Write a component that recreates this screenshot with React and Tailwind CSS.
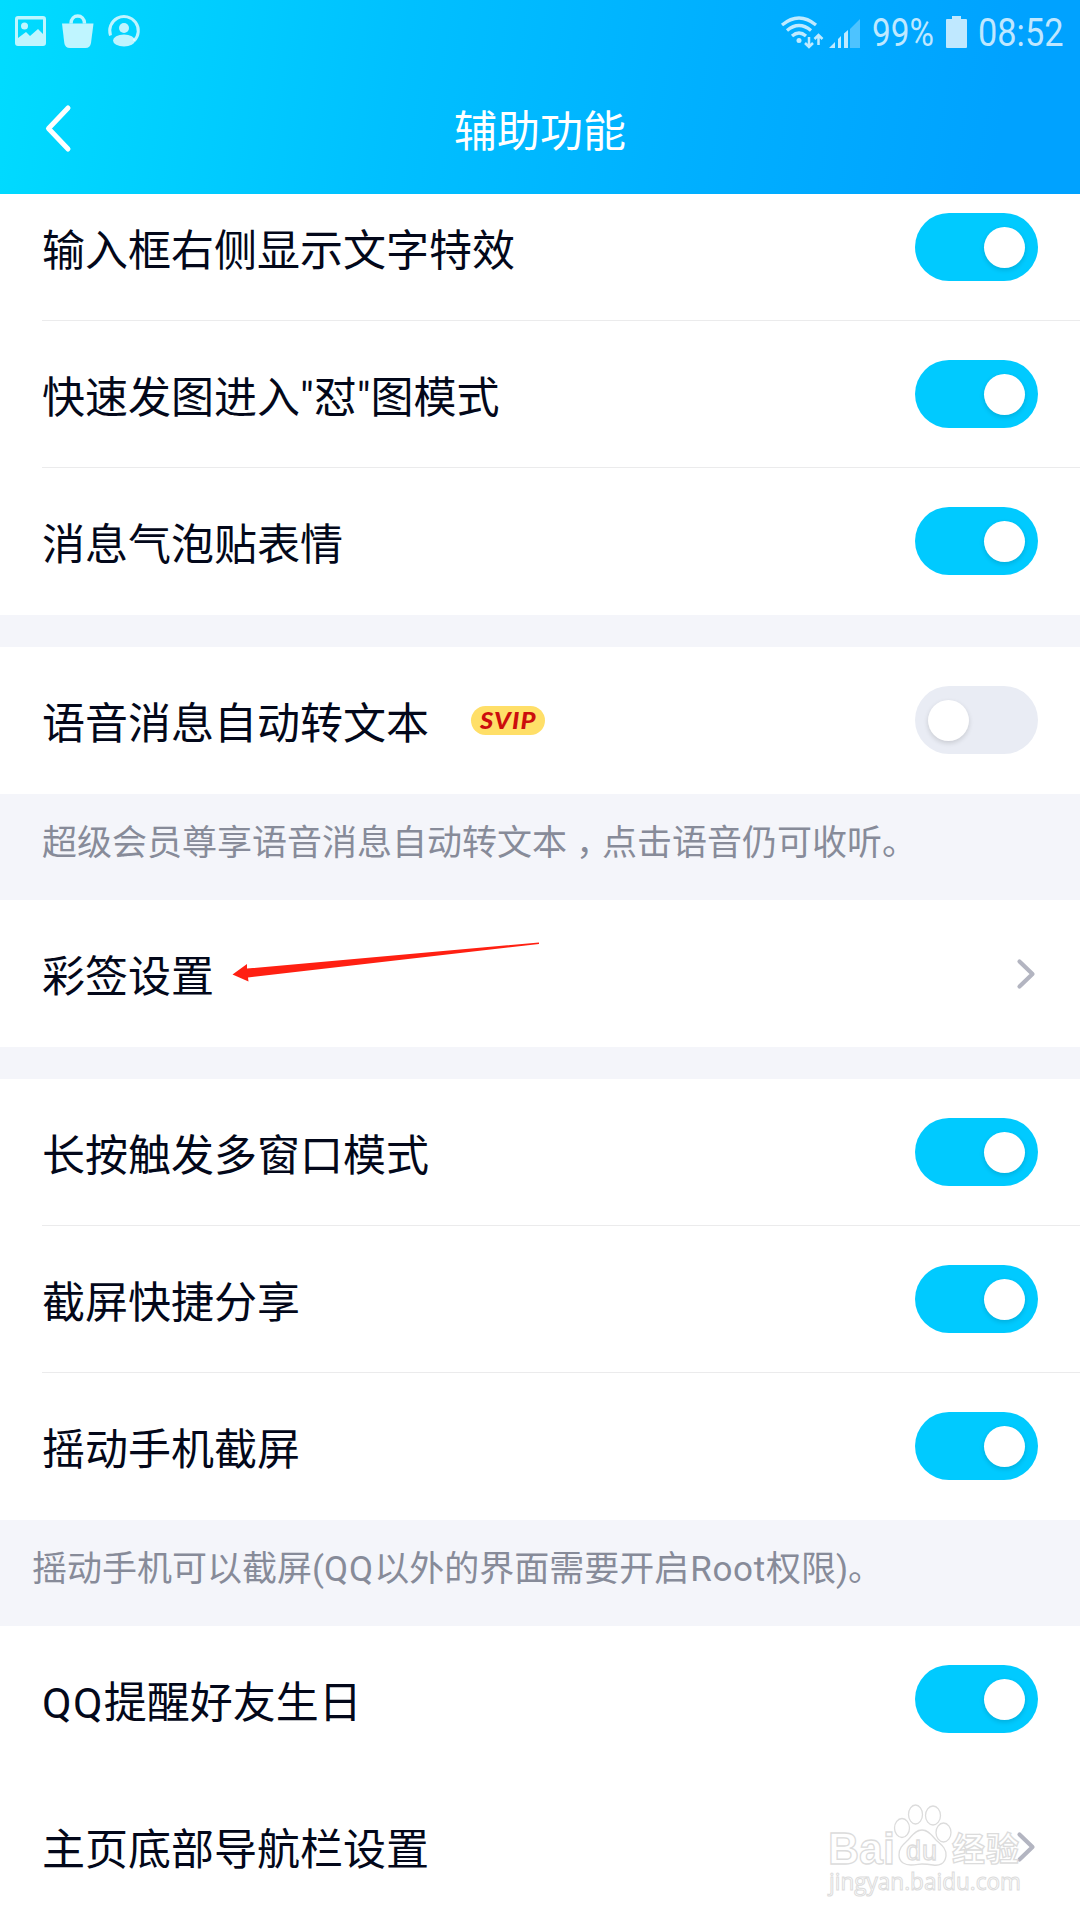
function Toggle({ on = true }) {
  return (
    <div
      className={
        on
          ? "flex h-[68px] w-[123px] items-center justify-end rounded-full bg-[#00caff] pr-[13.5px]"
          : "flex h-[68px] w-[123px] items-center justify-start rounded-full bg-[#e9ecf4] pl-[13px]"
      }
    >
      <div className="h-[41px] w-[41px] rounded-full bg-white shadow-[0_2px_5px_rgba(0,0,0,0.14)]" />
    </div>
  );
}

function Chevron() {
  return (
    <svg width="20" height="32" viewBox="0 0 20 32" fill="none" className="mt-[2px] mr-[2px]">
      <path d="M3.5 3.5 16.500 16 3.5 28.500" stroke="#b3b5c1" strokeWidth="4.200" strokeLinecap="round" strokeLinejoin="round" />
    </svg>
  );
}

function Row({ label, divider, children, extra }) {
  return (
    <div className="flex h-[147px] shrink-0 flex-col bg-white pl-[42px]">
      <div className="flex min-h-0 flex-1 items-center justify-between pr-[42px]">
        <div className="flex items-center">
          <span className="pt-[8px] leading-[60px] whitespace-nowrap text-[43px] text-[#03081a]">{label}</span>
          {extra}
        </div>
        {children}
      </div>
      <div className={divider ? "h-px bg-[#ebebec]" : "h-px"} />
    </div>
  );
}

function Note({ children, inset }) {
  return (
    <p
      className={
        inset
          ? "h-[106px] bg-[#f4f5fa] pt-[24px] pl-[32px] text-[35px] leading-[52px] text-[#878b99]"
          : "h-[106px] bg-[#f4f5fa] pt-[24px] pl-[42px] text-[35px] leading-[52px] text-[#878b99]"
      }
    >
      {children}
    </p>
  );
}

function Gap() {
  return <div className="h-[32px] shrink-0 bg-[#f4f5fa]" />;
}

function StatusBar() {
  return (
    <div className="flex h-[64px] items-center justify-between text-white/75">
      <svg width="150" height="40" viewBox="0 0 150 40" fill="none" className="mt-[-3px]">
        <path fillRule="evenodd" fill="currentColor" d="M18 5h25a3 3 0 0 1 3 3v24a3 3 0 0 1-3 3H18a3 3 0 0 1-3-3V8a3 3 0 0 1 3-3Zm0 3.500V27l8-6 4 4 8-7 5 5V8.500Z" />
        <circle cx="24.500" cy="15" r="3.500" fill="currentColor" />
        <path fill="currentColor" d="M62 12.500h31.500l-2.500 19.500q-.8 5-5.500 5H70q-5 0-5.700-5Z" />
        <path stroke="currentColor" strokeWidth="3.500" d="M71 12.500c0-10 13.500-10 13.500 0" />
        <path stroke="currentColor" strokeWidth="3" d="M110.500 24.500A14.300 14.300 0 1 1 134 30" />
        <circle cx="124" cy="17" r="5" fill="currentColor" />
        <ellipse cx="124" cy="29.500" rx="11" ry="6" fill="currentColor" />
      </svg>
      <div className="flex items-center pr-[17px]">
        <svg width="82" height="40" viewBox="780 10 82 40" fill="none">
          <g stroke="currentColor" strokeWidth="3.300">
            <path d="M782 23q17-14 34 0" />
            <path d="M787 28.500q12-10 24 0" />
            <path d="M792 34q7-6 14 0" />
          </g>
          <circle cx="799" cy="38.500" r="2.500" fill="currentColor" />
          <path d="M809 35v9M805 41l4 4 4-4M818.500 43v-9M814.500 37l4-4 4 4" stroke="currentColor" strokeWidth="2.500" />
          <path fill="currentColor" d="M829 46l6-6v6ZM838 37l3-3v12h-3ZM844 31.500l4-3.500v18h-4Z" />
          <path fill="currentColor" opacity=".4" d="M850 27l10-10v29H850Z" />
        </svg>
        <div className="ml-[10px] w-[64px] pt-[2px] font-['Roboto'] text-[39px] leading-[40px]">
          <span className="inline-block origin-left scale-x-[0.855]">99%</span>
        </div>
        <svg width="21" height="32" viewBox="0 0 21 32" className="ml-[10px]">
          <path fill="currentColor" d="M6 0h9v3h5q1 0 1 1v27q0 1-1 1H1q-1 0-1-1V4q0-1 1-1h5Z" />
        </svg>
        <div className="ml-[11px] w-[85px] pt-[2px] font-['Roboto'] text-[39px] leading-[40px]">
          <span className="inline-block origin-left scale-x-[0.88]">08:52</span>
        </div>
      </div>
    </div>
  );
}

function Header() {
  return (
    <header className="h-[194px] shrink-0 bg-[linear-gradient(100deg,#00dcff_0%,#00c0ff_37%,#00b0ff_64%,#00a2ff_92%)]">
      <StatusBar />
      <div className="grid h-[130px] grid-cols-[200px_1fr_200px] items-center">
        <svg width="28" height="50" viewBox="0 0 28 50" fill="none" className="ml-[44px]">
          <path d="M24 4 4.500 24.500 24 45" stroke="white" strokeWidth="5" strokeLinecap="round" strokeLinejoin="round" />
        </svg>
        <h1 className="pt-[6px] text-center text-[43px] leading-[60px] text-white">辅助功能</h1>
      </div>
    </header>
  );
}

function Watermark() {
  return (
    <svg
      width="220"
      height="110"
      viewBox="820 1795 220 110"
      className="pointer-events-none absolute bottom-[15px] left-[820px]"
      fill="white"
      stroke="#dcdcdc"
      strokeWidth="1.300"
    >
      <text x="828" y="1864" fontFamily="Liberation Sans" fontWeight="bold" fontSize="45" textLength="67" lengthAdjust="spacingAndGlyphs">Bai</text>
      <ellipse cx="902" cy="1828" rx="7.500" ry="9.500" />
      <ellipse cx="915.500" cy="1814.500" rx="7" ry="9.500" />
      <ellipse cx="933" cy="1815.500" rx="7.500" ry="9.500" />
      <ellipse cx="943.500" cy="1832.500" rx="7.500" ry="9.500" />
      <path d="M922 1830c7 0 10 6 14 10s11 8 10 16-7 10-13 9-8-1-11-1-6 1-11 1-12-2-12-10 5-11 9-15 7-10 14-10Z" />
      <text x="906" y="1860" fontFamily="Liberation Sans" fontSize="27" textLength="31">du</text>
      <text x="952" y="1861" fontFamily="Noto Sans CJK SC" fontWeight="bold" fontSize="33" textLength="67">经验</text>
      <text x="829" y="1890" fontFamily="Open Sans" fontSize="23" textLength="192" lengthAdjust="spacingAndGlyphs" strokeWidth="1">jingyan.baidu.com</text>
    </svg>
  );
}

export default function App() {
  return (
    <div className="relative flex h-[1920px] w-[1080px] flex-col overflow-hidden bg-white font-['Roboto','Noto_Sans_CJK_SC',sans-serif]">
      <Header />
      <div className="-mt-5 flex flex-col [clip-path:inset(20px_0_0_0)]">
        <Row label="输入框右侧显示文字特效" divider><Toggle /></Row>
        <Row label={'快速发图进入"怼"图模式'} divider><Toggle /></Row>
        <Row label="消息气泡贴表情"><Toggle /></Row>
        <Gap />
        <Row
          label="语音消息自动转文本"
          extra={
            <span className="ml-[42px] flex h-[29px] w-[74px] items-center justify-center rounded-full bg-[#ffdf68] pt-px font-['Lato'] text-[22px] leading-none font-black text-[#cc0d0d] italic">
              <span className="inline-block scale-x-[1.16] tracking-[1px]">SVIP</span>
            </span>
          }
        >
          <Toggle on={false} />
        </Row>
        <Note>
          超级会员尊享语音消息自动转文本<span className="ml-[9px] tracking-[-9px]">，</span>点击语音仍可收听。
        </Note>
        <Row label="彩签设置"><Chevron /></Row>
        <Gap />
        <Row label="长按触发多窗口模式" divider><Toggle /></Row>
        <Row label="截屏快捷分享" divider><Toggle /></Row>
        <Row label="摇动手机截屏"><Toggle /></Row>
        <Note inset>
          摇动手机可以截屏(<span className="tracking-[1px]">QQ</span>以外的界面需要开启<span className="ml-px tracking-[0.7px]">Root</span>权限)。
        </Note>
        <Row label={<><span className="tracking-[1.3px]">QQ</span>提醒好友生日</>}><Toggle /></Row>
        <Row label="主页底部导航栏设置"><Chevron /></Row>
      </div>
      <svg width="310" height="44" viewBox="0 0 310 44" className="pointer-events-none absolute top-[940px] left-[230px]">
        <path fill="#ff2012" d="M2.500 34.500 17 24v4.500L309 2.500v1.500L18 37.500l.5 4Z" />
      </svg>
      <Watermark />
    </div>
  );
}
